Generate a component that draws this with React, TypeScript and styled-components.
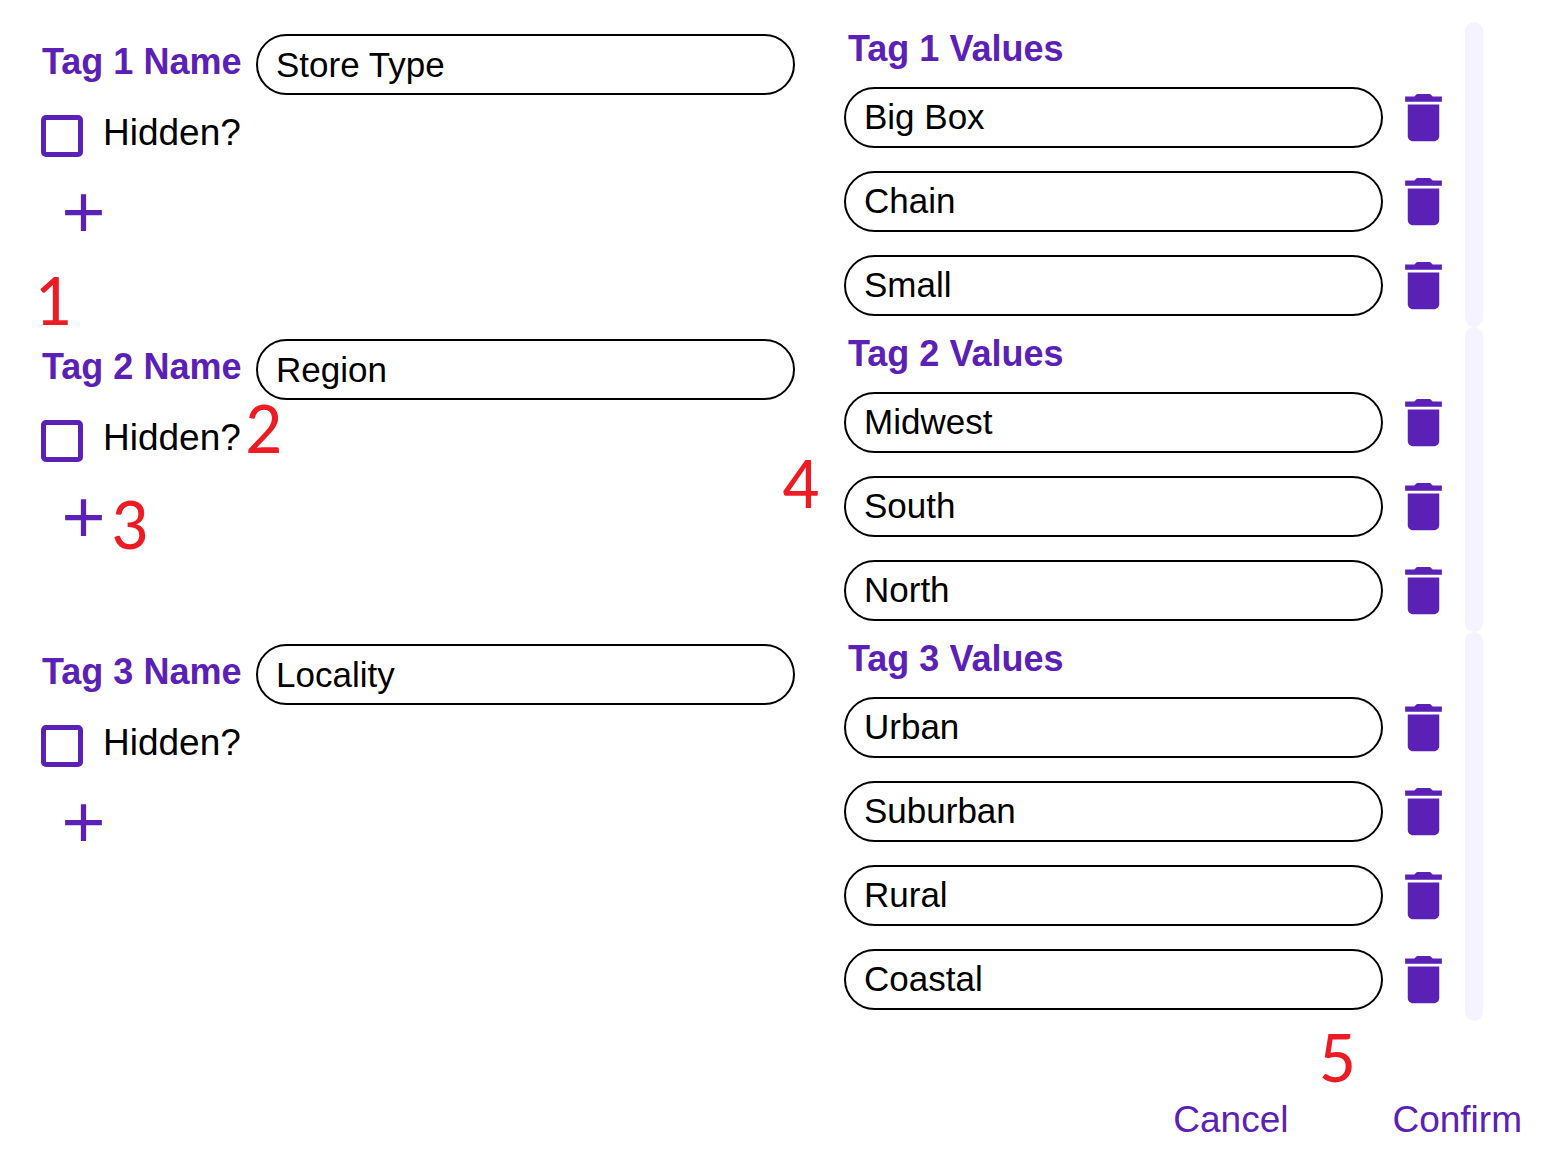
import React, { useState } from "react";
import styled, { createGlobalStyle } from "styled-components";

const PURPLE = "#5b21b6";

const GlobalStyle = createGlobalStyle`
  *, *::before, *::after { box-sizing: border-box; }
  body {
    margin: 0;
    background: #fff;
    color: #000;
    font-family: "Liberation Sans", Arial, sans-serif;
    font-size: 37px;
  }
  button, input { font-family: inherit; }
`;

const Page = styled.form`
  padding-top: 22px;
`;

const GroupList = styled.div`
  padding: 0 74px 0 41px;
`;

const Group = styled.section`
  display: flex;
  gap: 49px;
`;

const NameSide = styled.div`
  position: relative;
  flex: 1 1 215px;
  min-width: 0;
  padding-top: 12px;
`;

const NameRow = styled.div`
  display: flex;
  align-items: flex-start;
`;

const NameLabel = styled.label`
  flex: 0 0 215px;
  padding-left: 1px;
  color: ${PURPLE};
  font-size: 36px;
  font-weight: bold;
  line-height: 55px;
  white-space: nowrap;
`;

const TextField = styled.input`
  flex: 1;
  min-width: 0;
  height: 61px;
  padding: 0 18px;
  border: 2px solid #000;
  border-radius: 31px;
  background: #fff;
  color: #000;
  font-size: 35px;
`;

const HiddenRow = styled.label`
  display: flex;
  align-items: flex-start;
  gap: 20px;
  width: max-content;
  margin-top: 20px;
  line-height: 36px;
`;

const CheckBox = styled.input`
  appearance: none;
  width: 42px;
  height: 42px;
  margin: 0;
  border: 5px solid ${PURPLE};
  border-radius: 5px;
  background: #fff;
  &:checked { box-shadow: inset 0 0 0 5px #fff; background: ${PURPLE}; }
`;

const IconButton = styled.button`
  flex: none;
  display: block;
  width: 63px;
  height: 63px;
  padding: 0;
  border: 0;
  background: none;
  color: ${PURPLE};
  cursor: pointer;
  svg { display: block; width: 100%; height: 100%; fill: currentColor; }
`;

const AddButton = styled(IconButton)`
  margin: 24px 0 0 11px;
`;

const ValuesSide = styled.div`
  position: relative;
  flex: 1 1 100px;
  min-width: 0;
  display: flex;
  gap: 10px;
`;

const Values = styled.div`
  flex: 1;
  min-width: 0;
`;

const ValuesTitle = styled.h2`
  margin: 0;
  padding-left: 4px;
  color: ${PURPLE};
  font-size: 36px;
  line-height: 53px;
  white-space: nowrap;
`;

const ValueList = styled.ul`
  margin: 0;
  padding: 0;
  list-style: none;
`;

const ValueRow = styled.li`
  display: flex;
  align-items: center;
  gap: 9px;
  height: 84px;
`;

const Track = styled.div`
  flex: none;
  width: 18px;
  border-radius: 9px;
  background: #f5f3ff;
`;

const Footer = styled.footer`
  position: relative;
  display: flex;
  justify-content: flex-end;
  gap: 104px;
  margin-top: 78px;
  padding-right: 35px;
`;

const TextButton = styled.button`
  padding: 0;
  border: 0;
  background: none;
  color: ${PURPLE};
  font-size: 37px;
  line-height: 42px;
  cursor: pointer;
`;

const Callout = styled.span<{ $top: number; $left?: number; $right?: number }>`
  position: absolute;
  top: ${(p) => p.$top}px;
  ${(p) => (p.$left !== undefined ? `left: ${p.$left}px;` : "")}
  ${(p) => (p.$right !== undefined ? `right: ${p.$right}px;` : "")}
  color: #ed1c24;
  font-family: Carlito, Lato, sans-serif;
  font-size: 73px;
  line-height: 48px;
  pointer-events: none;
`;

const AddIcon = () => (
  <svg viewBox="0 0 24 24" aria-hidden="true">
    <path d="M19 13h-6v6h-2v-6H5v-2h6V5h2v6h6v2z" />
  </svg>
);

const DeleteIcon = () => (
  <svg viewBox="0 0 24 24" aria-hidden="true">
    <path d="M6 19c0 1.1.9 2 2 2h8c1.1 0 2-.9 2-2V7H6v12zM19 4h-3.500l-1-1h-5l-1 1H5v2h14V4z" />
  </svg>
);

interface Tag {
  name: string;
  hidden: boolean;
  values: string[];
}

const INITIAL_TAGS: Tag[] = [
  { name: "Store Type", hidden: false, values: ["Big Box", "Chain", "Small"] },
  { name: "Region", hidden: false, values: ["Midwest", "South", "North"] },
  { name: "Locality", hidden: false, values: ["Urban", "Suburban", "Rural", "Coastal"] },
];

export default function App() {
  const [tags, setTags] = useState(INITIAL_TAGS);

  const update = (index: number, change: Partial<Tag>) =>
    setTags(tags.map((tag, i) => (i === index ? { ...tag, ...change } : tag)));

  return (
    <Page onSubmit={(e) => e.preventDefault()}>
      <GlobalStyle />
      <GroupList>
        {tags.map((tag, t) => (
          <Group key={t}>
            <NameSide>
              <NameRow>
                <NameLabel htmlFor={`tag-${t}`}>Tag {t + 1} Name</NameLabel>
                <TextField
                  id={`tag-${t}`}
                  value={tag.name}
                  onChange={(e) => update(t, { name: e.target.value })}
                />
              </NameRow>
              <HiddenRow>
                <CheckBox
                  type="checkbox"
                  checked={tag.hidden}
                  onChange={(e) => update(t, { hidden: e.target.checked })}
                />
                Hidden?
              </HiddenRow>
              <AddButton
                type="button"
                aria-label="Add value"
                onClick={() => update(t, { values: [...tag.values, ""] })}
              >
                <AddIcon />
              </AddButton>
              {t === 1 && (
                <>
                  <Callout $top={-51} $left={-7}>1</Callout>
                  <Callout $top={77} $left={204}>2</Callout>
                  <Callout $top={173} $left={70}>3</Callout>
                </>
              )}
            </NameSide>
            <ValuesSide>
              <Values>
                <ValuesTitle>Tag {t + 1} Values</ValuesTitle>
                <ValueList>
                  {tag.values.map((value, v) => (
                    <ValueRow key={v}>
                      <TextField
                        aria-label={`Tag ${t + 1} value ${v + 1}`}
                        value={value}
                        onChange={(e) =>
                          update(t, {
                            values: tag.values.map((old, i) => (i === v ? e.target.value : old)),
                          })
                        }
                      />
                      <IconButton
                        type="button"
                        aria-label="Delete value"
                        onClick={() => update(t, { values: tag.values.filter((_, i) => i !== v) })}
                      >
                        <DeleteIcon />
                      </IconButton>
                    </ValueRow>
                  ))}
                </ValueList>
              </Values>
              <Track />
              {t === 1 && <Callout $top={132} $left={-62}>4</Callout>}
            </ValuesSide>
          </Group>
        ))}
      </GroupList>
      <Footer>
        <TextButton type="button">Cancel</TextButton>
        <TextButton type="submit">Confirm</TextButton>
        <Callout $top={-66} $right={201}>5</Callout>
      </Footer>
    </Page>
  );
}
